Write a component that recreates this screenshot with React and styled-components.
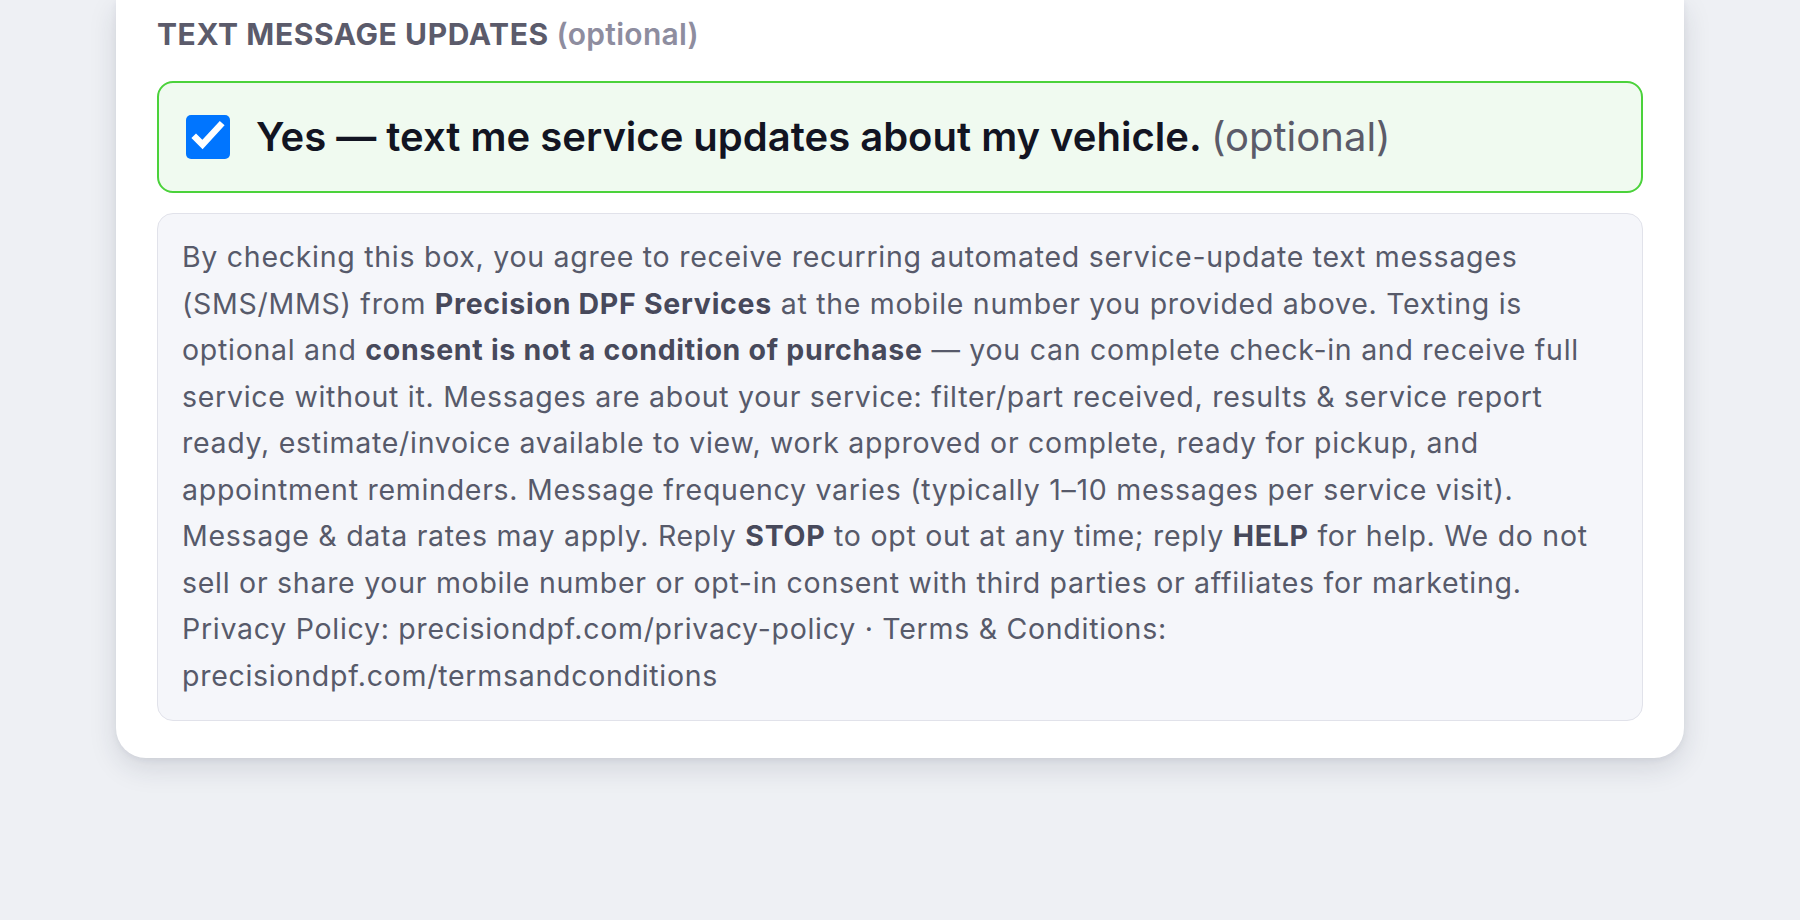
import React from "react";
import styled, { createGlobalStyle } from "styled-components";

const Global = createGlobalStyle`
  html, body { margin: 0; padding: 0; }
  body {
    background: #eef0f4;
    font-family: Inter, "Noto Sans", "Liberation Sans", sans-serif;
    -webkit-font-smoothing: antialiased;
  }
`;

const Page = styled.div`
  min-height: 920px;
  padding: 0 116px;
  box-sizing: border-box;
`;

const Card = styled.section`
  background: #ffffff;
  border-radius: 0 0 30px 30px;
  box-shadow: 0 10px 28px rgba(30, 35, 60, 0.13), 0 2px 6px rgba(30, 35, 60, 0.06);
  padding: 16px 41px 37px;
`;

const Heading = styled.h3`
  margin: 0 0 29px;
  font-size: 30px;
  line-height: 36px;
  font-weight: 700;
  letter-spacing: 0.02em;
  text-transform: uppercase;
  color: #5b5b6b;
`;

const HeadingNote = styled.span`
  text-transform: none;
  letter-spacing: 0.01em;
  font-weight: 600;
  color: #8e8d9f;
`;

const OptIn = styled.label`
  display: flex;
  align-items: center;
  gap: 26px;
  padding: 30px 27px;
  background: #f0faf0;
  border: 2px solid #4bd23b;
  border-radius: 16px;
  cursor: pointer;
`;

const Box = styled.span`
  flex: none;
  width: 44px;
  height: 44px;
  border-radius: 5px;
  background: ${(p) => (p.$checked ? "#0075ff" : "#ffffff")};
  display: flex;
  align-items: center;
  justify-content: center;
`;

const LabelText = styled.span`
  font-size: 40px;
  line-height: 48px;
  font-weight: 600;
  color: #121422;
`;

const LabelNote = styled.span`
  font-weight: 400;
  color: #5b5b69;
`;

const Legal = styled.div`
  margin-top: 20px;
  background: #f5f6fa;
  border: 1px solid #e1e2ea;
  border-radius: 16px;
  padding: 20px 24px 21px;
  font-size: 28.5px;
  line-height: 46.5px;
  letter-spacing: 0.72px;
  color: #575a6a;
`;

const Strong = styled.strong`
  font-weight: 700;
  color: #47495b;
`;

export default function App() {
  return (
    <>
      <Global />
      <Page>
        <Card>
          <Heading>
            Text message updates <HeadingNote>(optional)</HeadingNote>
          </Heading>
          <OptIn>
            <Box $checked>
              <svg width="44" height="44" viewBox="0 0 44 44" fill="none">
                <path
                  d="M10 23 L16.5 29.5 L34 10.5"
                  stroke="#ffffff"
                  strokeWidth="6.5"
                  strokeLinecap="square"
                  strokeLinejoin="miter"
                />
              </svg>
            </Box>
            <LabelText>
              Yes — text me service updates about my vehicle.{" "}
              <LabelNote>(optional)</LabelNote>
            </LabelText>
          </OptIn>
          <Legal>
            By checking this box, you agree to receive recurring automated
            service-update text messages (SMS/MMS) from{" "}
            <Strong>Precision DPF Services</Strong> at the mobile number you
            provided above. Texting is optional and{" "}
            <Strong>consent is not a condition of purchase</Strong> — you can
            complete check-in and receive full service without it. Messages are
            about your service: filter/part received, results &amp; service
            report ready, estimate/invoice available to view, work approved or
            complete, ready for pickup, and appointment reminders. Message
            frequency varies (typically 1–10 messages per service visit).
            Message &amp; data rates may apply. Reply <Strong>STOP</Strong> to
            opt out at any time; reply <Strong>HELP</Strong> for help. We do not
            sell or share your mobile number or opt-in consent with third
            parties or affiliates for marketing.
            <br />
            Privacy Policy: precisiondpf.com/privacy-policy · Terms &amp;
            Conditions: precisiondpf.com/termsandconditions
          </Legal>
        </Card>
      </Page>
    </>
  );
}
